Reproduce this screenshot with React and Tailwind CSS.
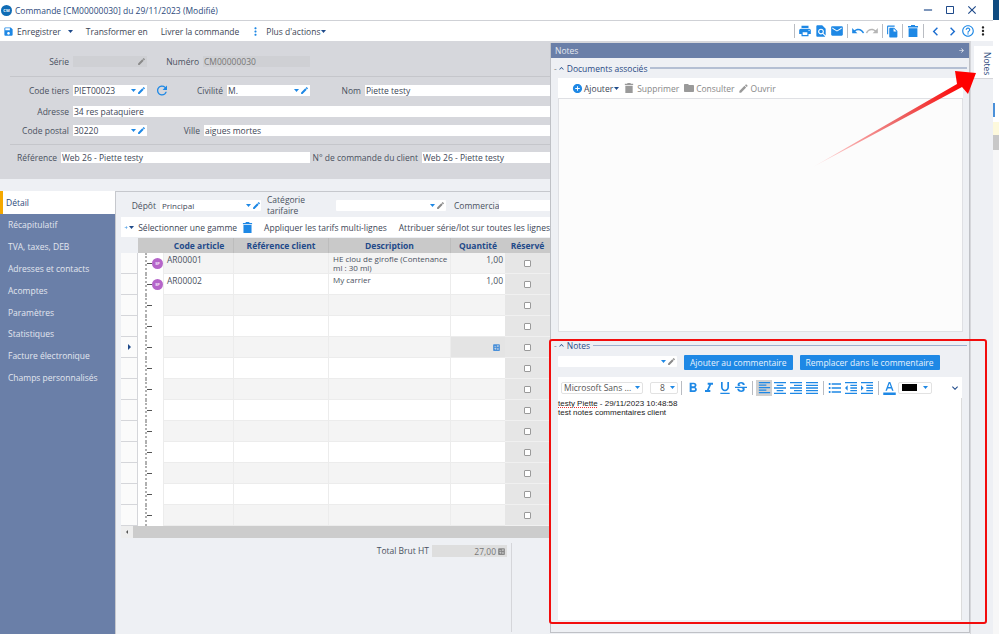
import React from 'react';
import {
  MdSave, MdPrint, MdFindInPage, MdEmail, MdUndo, MdRedo, MdFileCopy, MdChevronLeft, MdChevronRight,
  MdHelpOutline, MdMoreVert, MdEdit, MdRefresh, MdAddCircle, MdFolder, MdFormatBold, MdFormatItalic,
  MdFormatUnderlined, MdStrikethroughS, MdFormatAlignLeft, MdFormatAlignCenter, MdFormatAlignRight,
  MdFormatAlignJustify, MdFormatListBulleted, MdFormatIndentDecrease, MdFormatIndentIncrease,
  MdFormatColorText, MdKeyboardArrowDown, MdKeyboardArrowUp, MdArrowForward, MdClose, MdCropSquare,
  MdRemove, MdCalculate, MdCheckBoxOutlineBlank,
} from 'react-icons/md';

const Caret = ({ className = 'text-[#1e88e5]' }) => (
  <svg width="5" height="3" viewBox="0 0 5 3" className={`shrink-0 fill-current ${className}`}>
    <path d="M0 0h5L2.5 3z" />
  </svg>
);

const Trash = ({ size = 12, className = 'text-[#1e88e5]' }) => (
  <svg width={size} height={size} viewBox="0 0 12 12" className={`shrink-0 fill-current ${className}`}>
    <path d="M4 0h4v1h3v1.4H1V1h3zM1.6 3.2h8.8V12H1.6z" />
  </svg>
);

const Label = ({ w, children }) => (
  <div className="shrink-0 pr-[4px] text-right whitespace-nowrap" style={{ width: w }}>{children}</div>
);

const Input = ({ w, value, combo, disabled, grayEdit, grow }) => (
  <div
    className={`flex h-[11px] items-center pl-[1px] pr-[1px] whitespace-nowrap overflow-hidden ${grow ? 'flex-1' : 'shrink-0'} ${disabled ? 'bg-[#cfd0d4] text-[#777]' : 'bg-white text-[#3d4656]'}`}
    style={grow ? undefined : { width: w }}
  >
    <span className="flex-1 overflow-hidden">{value}</span>
    {combo && !disabled && <Caret />}
    {combo && <MdEdit size={9} className={`ml-[1px] shrink-0 ${disabled || grayEdit ? 'text-[#8a8a8a]' : 'text-[#1e88e5]'}`} />}
  </div>
);

const FormRow = ({ className = '', children }) => (
  <div className={`flex h-[11px] items-center ${className}`}>{children}</div>
);

const ToolSep = () => <div className="mx-[3px] h-[14px] w-px bg-[#b9bcc2]" />;

const navItems = ['Récapitulatif', 'TVA, taxes, DEB', 'Adresses et contacts', 'Acomptes', 'Paramètres', 'Statistiques', 'Facture électronique', 'Champs personnalisés'];

const rows = [
  { code: 'AR00001', desc: 'HE clou de girofle (Contenance ml : 30 ml)', qty: '1,00', node: true },
  { code: 'AR00002', desc: 'My carrier', qty: '1,00', node: true },
  {}, {}, { current: true }, {}, {}, {}, {}, {}, {}, {}, {},
];

const gridCols = 'grid grid-cols-[17px_25px_70px_95px_122px_55px_45px]';

const OrderGrid = () => (
  <div className="ml-[5px] w-[429px]">
    <div className={`${gridCols} h-[15px] items-center bg-[#c9c9c9] text-center font-bold text-[#1f4a8a]`}>
      <div className="h-full bg-[#eef0f4]" />
      <div />
      <div className="pl-[2px]">Code article</div>
      <div className="h-full border-l border-[#bdbdbd] leading-[15px]">Référence client</div>
      <div className="h-full border-l border-[#bdbdbd] leading-[15px]">Description</div>
      <div className="h-full border-l border-[#bdbdbd] leading-[15px]">Quantité</div>
      <div className="whitespace-nowrap">Réservé</div>
    </div>
    {rows.map((r, i) => {
      const bg = i % 2 === 0 ? 'bg-[#f4f4f4]' : 'bg-white';
      return (
        <div key={i} className={`${gridCols} h-[21px] text-[#4a5160]`}>
          <div className="flex items-center justify-center border-b border-r border-[#d5d6da] bg-[#fbfbfb]">
            {r.current && <div className="h-0 w-0 border-y-[3px] border-l-[3px] border-y-transparent border-l-[#1f4a8a]" />}
          </div>
          <div className="flex items-center bg-white">
            <div className="ml-[7px] h-full border-l-2 border-dotted border-[#b0b0b0]" />
            <div className="w-[5px] border-t border-dashed border-[#555]" />
            {r.node && (
              <div className="flex h-[11px] w-[11px] items-center justify-center rounded-full bg-[#b565c9] text-[4px] font-bold text-[#f3e6f7]">SP</div>
            )}
          </div>
          <div className={`${bg} border-b border-l border-[#ececec] pl-[3px] pt-[1px] leading-[11px]`}>{r.code}</div>
          <div className={`${bg} border-b border-l border-[#ececec]`} />
          <div className={`${bg} border-b border-l border-[#ececec] pl-[4px] pt-[1px] text-[8px] leading-[9px]`}>{r.desc}</div>
          <div className={`${r.current ? 'bg-[#e4e4e4]' : bg} flex justify-end border-b border-l border-[#ececec] pr-[2px] pt-[1px] leading-[11px]`}>
            {r.qty}
            {r.current && <MdCalculate size={9} className="mr-[2px] mt-[5px] text-[#4a90d9]" />}
          </div>
          <div className="flex items-center justify-center border-b border-[#f0f0f0] bg-[#e6e6e6]">
            <div className="h-[7px] w-[7px] rounded-[1px] border border-[#9a9a9a] bg-white" />
          </div>
        </div>
      );
    })}
    <div className="flex h-[12px] bg-[#cccccc]">
      <div className="flex w-[12px] items-center justify-center bg-[#eeeeee]">
        <div className="h-0 w-0 border-y-[2px] border-r-[2px] border-y-transparent border-r-[#555]" />
      </div>
    </div>
  </div>
);

const DetailPane = () => (
  <div className="flex min-w-0 flex-1 flex-col border-l border-t border-[#c6c8cd]">
    <div className="flex h-[25px] items-center pt-[1px]">
      <Label w={44}>Dépôt</Label>
      <div className="flex h-[11px] w-[101px] shrink-0 items-center rounded-[1px] bg-white pl-[2px] text-[8px] text-[#3d4656]">
        <span className="flex-1">Principal</span><Caret /><MdEdit size={9} className="ml-[1px] text-[#1e88e5]" />
      </div>
      <div className="ml-[6px] w-[69px] shrink-0">Catégorie tarifaire</div>
      <div className="flex h-[11px] w-[110px] shrink-0 items-center rounded-[1px] bg-white pr-[1px]">
        <span className="flex-1" /><Caret /><MdEdit size={9} className="ml-[1px] text-[#8a8a8a]" />
      </div>
      <div className="ml-[8px] w-[45px] shrink-0">Commercial</div>
      <div className="h-[11px] w-[120px] shrink-0 rounded-[1px] bg-white" />
    </div>
    <div className="ml-[5px] flex h-[20px] w-[429px] items-center whitespace-nowrap bg-white text-[#3d4656]">
      <MdArrowForward size={13} className="ml-[3px] text-[#1e88e5]" />
      <div className="ml-[1px]"><Caret className="text-[#1f4a8a]" /></div>
      <span className="ml-[4px]">Sélectionner une gamme</span>
      <Trash size={11} className="ml-[5px] text-[#1e88e5]" />
      <span className="ml-[11px]">Appliquer les tarifs multi-lignes</span>
      <span className="ml-[12px]">Attribuer série/lot sur toutes les lignes</span>
    </div>
    <div className="h-px" />
    <OrderGrid />
    <div className="flex min-h-0 flex-1 pt-[5px]">
      <div className="flex w-[395px] shrink-0 items-start justify-end border-r-0 pr-[4px] pt-[2px]">
        <span className="mr-[3px] leading-[11px]">Total Brut HT</span>
        <div className="flex h-[12px] w-[75px] items-center justify-end bg-[#dedede] pr-[1px] text-[#777]">
          27,00<MdCalculate size={9} className="ml-[1px] text-[#888]" />
        </div>
      </div>
      <div className="mb-[2px] w-px bg-[#d5d6da]" />
      <div className="relative flex flex-1 flex-col items-end pr-[2px] pt-[3px] text-right">
        <span>%</span>
        <span className="mt-[31px]">T</span>
        <span className="mt-[10px]">Total</span>
      </div>
    </div>
  </div>
);

const NotesPanel = () => (
  <div className="absolute left-[550px] top-[2px] z-10 flex h-[590px] w-[420px] flex-col border-b border-l border-r border-[#bfc1c6] bg-[#eef0f4]">
    <div className="flex h-[15px] shrink-0 items-center justify-between bg-[#6a7fa8] pl-[4px] pr-[4px] text-[#e4e8f0]">
      <span>Notes</span>
      <MdArrowForward size={7} className="text-white" />
    </div>
    <div className="flex h-[20px] shrink-0 items-center pl-[3px] pr-[2px] text-[#2a4a85]">
      <span className="text-[#888]">-</span>
      <MdKeyboardArrowUp size={9} className="text-[#1f4a8a]" />
      <span className="ml-[1px] whitespace-nowrap">Documents associés</span>
      <div className="ml-[3px] h-[2px] flex-1 bg-[#b4bfd3]" />
    </div>
    <div className="ml-[7px] mr-[6px] flex h-[20px] shrink-0 items-center bg-white text-[#888]">
      <MdAddCircle size={11} className="ml-[14px] text-[#1e88e5]" />
      <span className="ml-[1px] text-[#3d4656]">Ajouter</span>
      <Caret className="ml-[1px] text-[#1f4a8a]" />
      <Trash size={10} className="ml-[5px] text-[#9a9a9a]" />
      <span className="ml-[3px]">Supprimer</span>
      <MdFolder size={12} className="ml-[4px] text-[#9a9a9a]" />
      <span className="ml-[1px]">Consulter</span>
      <MdEdit size={11} className="ml-[3px] text-[#9a9a9a]" />
      <span className="ml-[2px]">Ouvrir</span>
    </div>
    <div className="ml-[7px] mr-[6px] h-[234px] shrink-0 border border-[#dfe0e4] bg-[#fcfcfc]" />
    <div className="mt-[7px] flex h-[13px] shrink-0 items-center pl-[3px] pr-[2px] text-[#2a4a85]">
      <span className="text-[#888]">-</span>
      <MdKeyboardArrowUp size={9} className="text-[#1f4a8a]" />
      <span className="ml-[1px]">Notes</span>
      <div className="ml-[3px] h-px flex-1 bg-[#9db1cf]" />
    </div>
    <div className="ml-[7px] mt-[3px] flex h-[16px] shrink-0 items-start">
      <div className="mt-[1px] flex h-[11px] w-[119px] items-center justify-end rounded-[1px] bg-white pr-[1px]">
        <Caret /><MdEdit size={9} className="ml-[1px] text-[#8a8a8a]" />
      </div>
      <div className="ml-[7px] flex h-[15px] items-center rounded-[1px] bg-[#1e88e5] px-[6px] text-[#e8f2fc]">Ajouter au commentaire</div>
      <div className="ml-[7px] flex h-[15px] items-center rounded-[1px] bg-[#1e88e5] px-[6px] text-[#e8f2fc]">Remplacer dans le commentaire</div>
    </div>
    <div className="ml-[7px] mr-[7px] mt-[6px] flex h-[21px] shrink-0 items-center bg-white pl-[3px]">
      <div className="flex h-[12px] w-[82px] items-center justify-between rounded-[2px] border border-[#e2e2e2] px-[2px] text-[#555]">
        <span className="whitespace-nowrap">Microsoft Sans ...</span><Caret />
      </div>
      <div className="ml-[7px] flex h-[12px] w-[28px] items-center justify-between rounded-[2px] border border-[#e2e2e2] pl-[9px] pr-[2px] text-[#555]">
        <span>8</span><Caret />
      </div>
      <ToolSep />
      <div className="flex items-center text-[#1e88e5]">
        <MdFormatBold size={16} />
        <MdFormatItalic size={16} />
        <MdFormatUnderlined size={16} />
        <MdStrikethroughS size={16} />
      </div>
      <ToolSep />
      <div className="flex items-center text-[#1e88e5]">
        <div className="flex h-[16px] w-[16px] items-center justify-center bg-[#d0d0d0]"><MdFormatAlignLeft size={15} /></div>
        <MdFormatAlignCenter size={16} />
        <MdFormatAlignRight size={16} />
        <MdFormatAlignJustify size={16} />
      </div>
      <ToolSep />
      <div className="flex items-center text-[#1e88e5]">
        <MdFormatListBulleted size={16} />
        <MdFormatIndentDecrease size={16} />
        <MdFormatIndentIncrease size={16} />
      </div>
      <ToolSep />
      <MdFormatColorText size={15} className="text-[#1e88e5]" />
      <div className="ml-[1px] flex h-[12px] w-[34px] items-center justify-between rounded-[2px] border border-[#e2e2e2] pl-[3px] pr-[3px]">
        <div className="h-[7px] w-[15px] bg-black" /><Caret />
      </div>
      <div className="flex-1" />
      <MdKeyboardArrowDown size={12} className="mr-[1px] text-[#1f4a8a]" />
    </div>
    <div className="ml-[7px] mr-[7px] h-[222px] shrink-0 border-r border-[#dcdcdc] bg-white pt-[1px] font-['Liberation_Sans',sans-serif] text-[8px] leading-[9px] text-[#222]">
      <div><span className="underline decoration-dotted decoration-[#e33]">testy Piette</span> - 29/11/2023 10:48:58</div>
      <div>test notes commentaires client</div>
    </div>
  </div>
);

export default function App() {
  return (
    <div className="relative flex h-[634px] w-[999px] overflow-hidden bg-[#eef0f4] font-['Open_Sans',sans-serif] text-[8.5px] leading-[11px] text-[#4a5160]">
      <div className="flex w-[993px] shrink-0 flex-col">
        <div className="flex h-[21px] shrink-0 items-center border-b border-[#cfd1d6] bg-white pl-[1px]">
          <div className="flex h-[11px] w-[11px] items-center justify-center rounded-full bg-[#0f6cb5] text-[4px] font-bold text-white">CM</div>
          <span className="ml-[3px] whitespace-nowrap text-[#2d4a7c]">Commande [CM00000030] du 29/11/2023 (Modifié)</span>
          <div className="flex-1" />
          <div className="flex items-center gap-[9px] pr-[14px] text-[#1f4a8a]">
            <MdRemove size={14} />
            <MdCropSquare size={12} />
            <MdClose size={14} />
          </div>
        </div>
        <div className="flex h-[20px] shrink-0 items-center bg-white pl-[3px] text-[#3d4656]">
          <MdSave size={11} className="text-[#1e88e5]" />
          <span className="ml-[3px]">Enregistrer</span>
          <Caret className="ml-[7px] text-[#1f4a8a]" />
          <span className="ml-[13px]">Transformer en</span>
          <span className="ml-[13px]">Livrer la commande</span>
          <MdMoreVert size={13} className="ml-[10px] text-[#1e88e5]" />
          <span className="ml-[4px]">Plus d'actions</span>
          <Caret className="ml-[1px] text-[#1f4a8a]" />
          <div className="flex-1" />
          <div className="flex items-center pr-[3px] text-[#1e88e5]">
            <ToolSep />
            <MdPrint size={14} />
            <MdFindInPage size={14} className="ml-[2px]" />
            <MdEmail size={14} className="ml-[2px]" />
            <ToolSep />
            <MdUndo size={14} />
            <MdRedo size={14} className="text-[#b5b5b5]" />
            <ToolSep />
            <MdFileCopy size={13} />
            <ToolSep />
            <Trash size={12} className="mx-[1px] text-[#1e88e5]" />
            <ToolSep />
            <MdChevronLeft size={17} className="text-[#1e6fd0]" />
            <MdChevronRight size={17} className="text-[#1e6fd0]" />
            <MdHelpOutline size={14} className="text-[#1e88e5]" />
            <MdMoreVert size={14} className="ml-[1px] text-[#222]" />
          </div>
        </div>
        <div className="flex min-h-0 flex-1">
          <div className="relative flex w-[970px] shrink-0 flex-col">
            <div className="h-[138px] shrink-0 bg-[#d6d7dc] pt-[15px] text-[#4a5160]">
              <FormRow>
                <Label w={73}>Série</Label>
                <Input w={74} combo disabled />
                <Label w={56}>Numéro</Label>
                <Input w={107} value="CM00000030" disabled />
              </FormRow>
              <div className="ml-[10px] mt-[9px] h-px bg-[#c5c6cb]" />
              <FormRow className="mt-[8px]">
                <Label w={73}>Code tiers</Label>
                <Input w={74} value="PIET00023" combo />
                <MdRefresh size={15} className="ml-[7px] w-[16px] shrink-0 text-[#1e88e5]" />
                <Label w={57}>Civilité</Label>
                <Input w={83} value="M." combo />
                <Label w={55}>Nom</Label>
                <Input w={185} value="Piette testy" />
              </FormRow>
              <FormRow className="mt-[10px]">
                <Label w={73}>Adresse</Label>
                <Input w={477} value="34 res pataquiere" />
              </FormRow>
              <FormRow className="mt-[8px]">
                <Label w={73}>Code postal</Label>
                <Input w={74} value="30220" combo />
                <Label w={57}>Ville</Label>
                <Input w={346} value="aigues mortes" />
              </FormRow>
              <div className="ml-[10px] mt-[8px] h-px bg-[#c5c6cb]" />
              <FormRow className="mt-[7px]">
                <Label w={61}>Référence</Label>
                <Input w={249} value="Web 26 - Piette  testy" />
                <Label w={112}>N° de commande du client</Label>
                <Input w={128} value="Web 26 - Piette  testy" />
              </FormRow>
            </div>
            <div className="flex min-h-0 flex-1 pt-[12px]">
              <div className="w-[115px] shrink-0 bg-[#6a7fa8] text-[#e2e6ef]">
                <div className="flex h-[23px] items-center border-l-[3px] border-[#f5a800] bg-white pl-[3px] text-[#2d4a7c]">Détail</div>
                {navItems.map((item) => (
                  <div key={item} className="flex h-[21.8px] items-center whitespace-nowrap pl-[8px]">{item}</div>
                ))}
              </div>
              <DetailPane />
            </div>
            <NotesPanel />
          </div>
          <div className="w-[23px] shrink-0 border-l border-[#d5d6da] pl-[3px] pt-[5px]">
            <div className="flex h-[33px] w-[19px] justify-center border-b border-[#d5d6da] bg-white pt-[4px] text-[#2d4a7c] [writing-mode:vertical-rl]">Notes</div>
          </div>
        </div>
      </div>
      <div className="flex w-[6px] shrink-0 flex-col bg-white">
        <div className="h-[20px] bg-[#0f4c81]" />
        <div className="h-[83px] bg-white" />
        <div className="h-[14px] w-[2px] bg-[#4a90d9]" />
        <div className="h-[5px]" />
        <div className="h-[13px] bg-[#fdf9dc]" />
        <div className="h-[15px] bg-[#c8c8c8]" />
        <div className="flex-1 bg-[#f7f7f7]" />
      </div>
      <svg width="999" height="634" viewBox="0 0 999 634" className="pointer-events-none absolute left-0 top-0 z-20">
        <defs>
          <linearGradient id="arrowFade" gradientUnits="userSpaceOnUse" x1="813" y1="167" x2="960" y2="80">
            <stop offset="0" stopColor="#ff0000" stopOpacity="0.05" />
            <stop offset="0.55" stopColor="#e63a3a" stopOpacity="0.75" />
            <stop offset="1" stopColor="#ff0000" />
          </linearGradient>
        </defs>
        <path d="M813 167 L957 84 L955 71 L976 73 L968 94 L962 87 Z" fill="url(#arrowFade)" />
      </svg>
      <div className="pointer-events-none absolute left-[549px] top-[339px] z-20 h-[285px] w-[438px] rounded-[3px] border-2 border-[#f20d0d]" />
    </div>
  );
}
